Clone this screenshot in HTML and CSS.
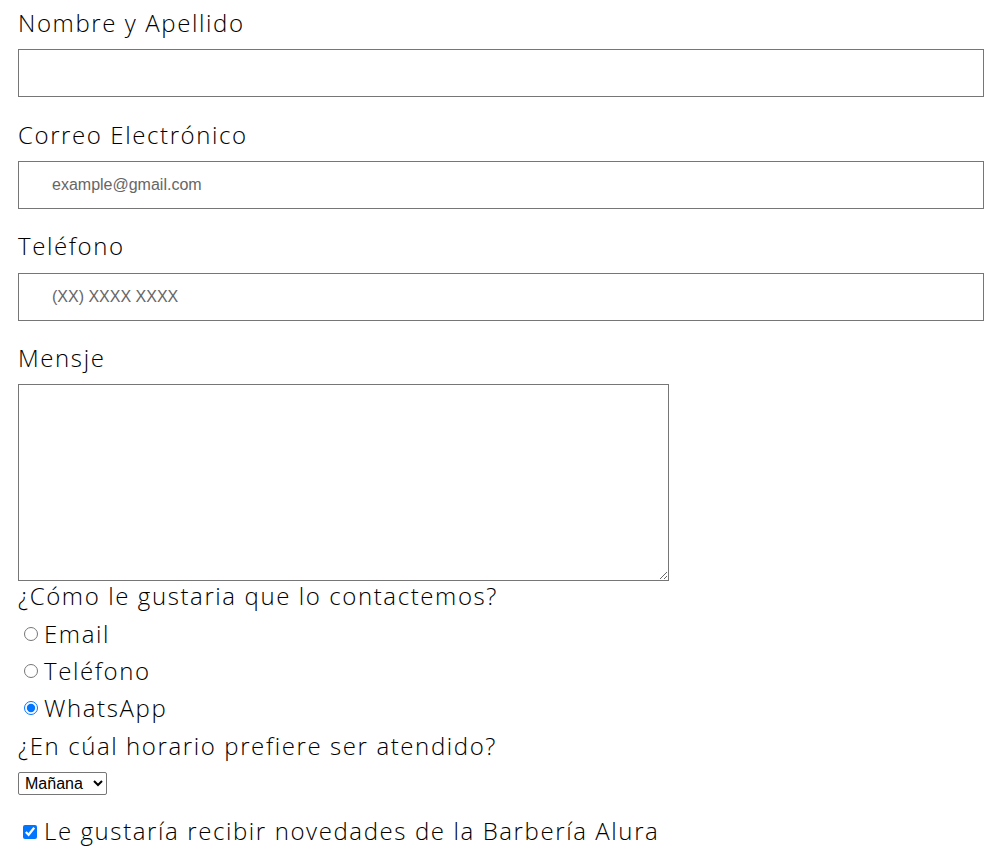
FILE: index.html
```html
<!DOCTYPE html>
<html lang="es">
<head>
<meta charset="utf-8">
<title>Contacto</title>
<link rel="stylesheet" href="styles.css">
</head>
<body>
<form class="form">
  <label class="label" for="nombre">Nombre y Apellido</label>
  <input class="input" id="nombre" type="text">

  <label class="label" for="email">Correo Electrónico</label>
  <input class="input" id="email" type="email" placeholder="example@gmail.com">

  <label class="label" for="tel">Teléfono</label>
  <input class="input" id="tel" type="tel" placeholder="(XX) XXXX XXXX">

  <label class="label" for="msg">Mensje</label>
  <textarea class="textarea" id="msg"></textarea>

  <fieldset class="group">
    <legend class="question">¿Cómo le gustaria que lo contactemos?</legend>
    <div class="options">
      <label class="option"><input class="radio" type="radio" name="contacto" value="email">Email</label>
      <label class="option"><input class="radio" type="radio" name="contacto" value="telefono">Teléfono</label>
      <label class="option"><input class="radio" type="radio" name="contacto" value="whatsapp" checked>WhatsApp</label>
    </div>
  </fieldset>

  <label class="question question-time" for="horario">¿En cúal horario prefiere ser atendido?</label>
  <div class="select-row">
    <select class="select" id="horario">
      <option>Mañana</option>
      <option>Tarde</option>
      <option>Noche</option>
    </select>
  </div>

  <label class="check-row"><input class="checkbox" type="checkbox" checked>Le gustaría recibir novedades de la Barbería Alura</label>
</form>
</body>
</html>
```

FILE: styles.css
```css
html, body {
  margin: 0;
  padding: 0;
  background: #fff;
}

.form {
  padding: 8px 18px 0 18px;
  font-family: "Open Sans", "DejaVu Sans", sans-serif;
  font-weight: 350;
  color: #000;
}

.label {
  display: block;
  font-size: 24px;
  line-height: 29.3px;
  letter-spacing: 1.6px;
}

.input {
  display: block;
  box-sizing: border-box;
  width: 100%;
  height: 48px;
  margin: 12px 0 22.4px 0;
  padding: 0 0 0 33px;
  border: 1px solid #767676;
  border-radius: 0;
  font-family: "Liberation Sans", Arial, sans-serif;
  font-size: 16px;
  color: #000;
  outline: none;
}

.input::placeholder {
  color: #666;
}

.textarea {
  display: block;
  box-sizing: border-box;
  width: 651px;
  height: 197px;
  margin: 12px 0 0 0;
  border: 1px solid #767676;
  border-radius: 0;
  padding: 2px;
  resize: both;
}

.group {
  border: 0;
  margin: 0;
  padding: 0;
}

.question {
  display: block;
  padding: 0;
  font-size: 24px;
  line-height: 29.3px;
  letter-spacing: 1.6px;
}

.options {
  display: flex;
  flex-direction: column;
  padding-top: 4px;
}

.option {
  display: flex;
  align-items: center;
  font-size: 24px;
  line-height: 37px;
  letter-spacing: 1.6px;
}

.radio {
  margin: 2px 6px 0 6px;
  width: 14px;
  height: 14px;
}

.question-time {
  margin-top: 5.5px;
}

.select-row {
  padding: 12px 0 21px 0;
}

.select {
  display: block;
  box-sizing: border-box;
  width: 89px;
  font-family: "Liberation Sans", Arial, sans-serif;
  font-size: 16px;
  height: 23px;
  border: 1px solid #767676;
  border-radius: 2px;
  background: #fff;
  color: #000;
  padding: 0 0 0 2px;
}

.check-row {
  display: flex;
  align-items: center;
  font-size: 24px;
  line-height: 29.3px;
  letter-spacing: 1.6px;
}

.checkbox {
  margin: 2px 7px 0 5px;
  width: 14px;
  height: 14px;
}
```
